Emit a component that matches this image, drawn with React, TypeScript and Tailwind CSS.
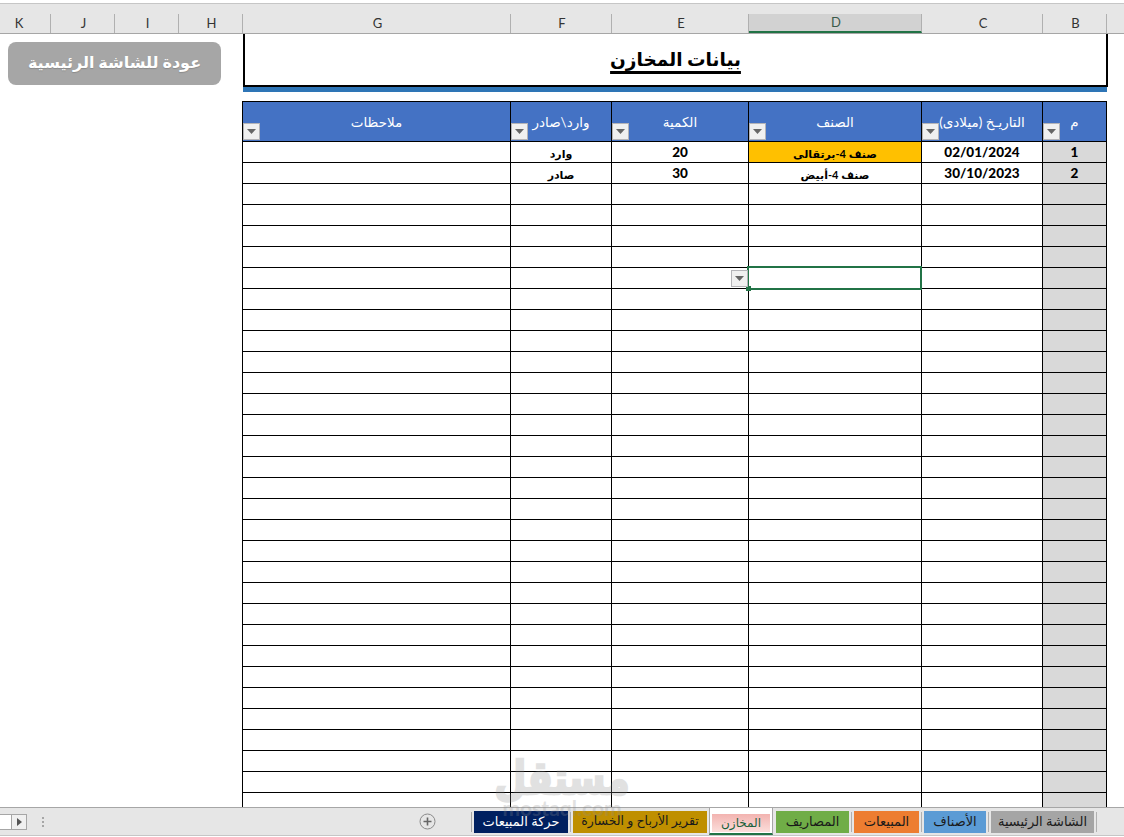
const ROW_COUNT = 32;

// sheet columns, left to right as they appear on screen
const COLUMNS = [
  { letter: "G", label: "ملاحظات", width: "w-[268px]", shade: false },
  { letter: "F", label: "وارد\\صادر", width: "w-[101px]", shade: false },
  { letter: "E", label: "الكمية", width: "w-[137px]", shade: false },
  { letter: "D", label: "الصنف", width: "w-[173px]", shade: false },
  { letter: "C", label: "التاريـخ (ميلادى)", width: "w-[121px]", shade: false },
  { letter: "B", label: "م", width: "w-[64px]", shade: true },
];

const DATA: Record<number, string[]> = {
  0: ["", "وارد", "20", "صنف 4-برتقالى", "02/01/2024", "1"],
  1: ["", "صادر", "30", "صنف 4-أبيض", "30/10/2023", "2"],
};

const TABS = [
  { label: "حركة المبيعات", cls: "w-[94px] bg-[#002060] text-[13px] text-white" },
  { label: "تقرير الأرباح و الخسارة", cls: "w-[134px] bg-[#bf8f00] text-[12.5px] text-[#1a1a1a]" },
  { label: "المصاريف", cls: "w-[73px] bg-[#70ad47] text-[13px] text-[#1a1a1a]" },
  { label: "المبيعات", cls: "w-[65px] bg-[#ed7d31] text-[13px] text-[#1a1a1a]" },
  { label: "الأصناف", cls: "w-[62px] bg-[#5b9bd5] text-[13px] text-[#1a1a1a]" },
  { label: "الشاشة الرئيسية", cls: "w-[103px] bg-[#a5a5a5] text-[13px] text-[#1a1a1a]" },
];

function FilterButton({ className }: { className: string }) {
  return (
    <div className={`absolute flex h-[17px] w-[17px] items-center justify-center border border-[#b4b4b8] bg-[#f0f0f0] ${className}`}>
      <svg width="9" height="5" viewBox="0 0 9 5">
        <path d="M0 0h9L4.5 5z" fill="#666" />
      </svg>
    </div>
  );
}

function LetterCell({ letter, width, active, nudge = "pl-[2px]" }: { letter: string; width: string; active?: boolean; nudge?: string }) {
  return (
    <div
      className={`flex shrink-0 items-center justify-center border-r border-[#b0b0b0] text-[13px] ${width} ${nudge} ${
        active ? "border-b-2 border-b-[#217346] bg-[#d2d2d2] text-[#3a5a4a]" : "text-[#333]"
      }`}
    >
      {letter}
    </div>
  );
}

function Tab({ label, cls }: { label: string; cls: string }) {
  return (
    <div className={`flex h-[22px] shrink-0 items-center justify-center whitespace-nowrap ${cls}`}>{label}</div>
  );
}

export default function App() {
  return (
    <div className="relative flex h-[837px] w-[1124px] flex-col overflow-hidden bg-white font-[Lato,'DejaVu_Sans',sans-serif]">
      {/* column letters */}
      <div className="mt-[3px] flex h-[31px] shrink-0 items-end border-y border-t-[#c6c6c6] border-b-[#a6a6a6] bg-[#e6e6e6]">
        <div className="flex h-[19px] w-full">
          <LetterCell letter="K" width="w-[51px]" nudge="pr-[12px]" />
          <LetterCell letter="J" width="w-[64px]" />
          <LetterCell letter="I" width="w-[64px]" />
          <LetterCell letter="H" width="w-[64px]" />
          {COLUMNS.map((c) => (
            <LetterCell key={c.letter} letter={c.letter} width={c.width} active={c.letter === "D"} />
          ))}
        </div>
      </div>

      {/* sheet */}
      <div className="flex h-[773px] shrink-0 overflow-hidden">
        <div className="w-[243px] shrink-0 pl-2 pt-2">
          <div className="flex h-[43px] w-[213px] items-center justify-center rounded-lg bg-[#a6a6a6] pb-[3px] text-[16px] font-bold text-white [text-shadow:0_1px_1px_#8a8a8a]">
            عودة للشاشة الرئيسية
          </div>
        </div>

        <div className="w-[865px] shrink-0">
          <div className="flex h-[53px] items-center justify-center border-x-2 border-b-2 border-black">
            <span className="text-[18.5px] font-bold text-black underline decoration-[3px] underline-offset-[5px]">بيانات المخازن</span>
          </div>
          <div className="h-[5px] w-[864px] bg-[#2e75b6]" />

          <div className="relative -ml-px mt-[9px] w-[865px] border-l border-black">
            {/* table head */}
            <div className="flex h-[41px] border-y border-black bg-[#4472c4]">
              {COLUMNS.map((c) => (
                <div
                  key={c.letter}
                  className={`relative flex shrink-0 items-center justify-center overflow-hidden whitespace-nowrap border-r border-black pt-[2px] text-[13.5px] text-white ${c.width}`}
                >
                  {c.label}
                  <FilterButton className="bottom-[1px] left-0" />
                </div>
              ))}
            </div>

            {/* table rows */}
            {Array.from({ length: ROW_COUNT }, (_, row) => (
              <div key={row} className="flex h-[21px] border-b border-black">
                {COLUMNS.map((c, col) => (
                  <div
                    key={c.letter}
                    className={`flex shrink-0 items-center justify-center border-r border-black pt-[2px] text-[13.5px] font-black leading-none text-black ${c.width} ${
                      c.shade ? "bg-[#d9d9d9]" : ""
                    } ${row === 0 && c.letter === "D" ? "bg-[#ffc000]" : ""}`}
                  >
                    {col === 3 || col === 1 ? <span className="text-[11px] font-bold">{DATA[row]?.[col]}</span> : DATA[row]?.[col]}
                  </div>
                ))}
              </div>
            ))}

            {/* active cell with its validation dropdown */}
            <div className="absolute left-[504px] top-[165px] h-[24px] w-[175px] border-2 border-[#217346]">
              <div className="absolute -bottom-[3px] -left-[3px] h-[5px] w-[5px] bg-[#217346]" />
            </div>
            <FilterButton className="left-[488px] top-[169px]" />
          </div>
        </div>
      </div>

      {/* sheet tabs */}
      <div className="flex h-[29px] shrink-0 items-center border-y border-t-[#a6a6a6] border-b-[#c6c6c6] bg-[#e6e6e6]">
        <div className="flex h-[16px] w-[27px] shrink-0 border border-l-0 border-[#a6a6a6] bg-white">
          <div className="w-[12px] border-r border-[#a6a6a6]" />
          <div className="flex flex-1 items-center justify-center bg-[#f0f0f0]">
            <svg width="5" height="8" viewBox="0 0 5 8">
              <path d="M0 0l5 4-5 4z" fill="#555" />
            </svg>
          </div>
        </div>
        <div className="ml-[15px] flex flex-col gap-[2px]">
          <div className="h-[2px] w-[2px] bg-[#a6a6a6]" />
          <div className="h-[2px] w-[2px] bg-[#a6a6a6]" />
          <div className="h-[2px] w-[2px] bg-[#a6a6a6]" />
        </div>
        <svg className="ml-[375px] shrink-0" width="17" height="17" viewBox="0 0 17 17">
          <circle cx="8.5" cy="8.5" r="7.5" fill="none" stroke="#8a8a8a" />
          <path d="M8.5 4.5v8M4.5 8.5h8" stroke="#666" strokeWidth="1.6" />
        </svg>

        <div className="ml-[35px] h-[20px] w-px shrink-0 bg-[#a6a6a6]" />
        <div className="ml-[2px] flex items-center">
          <Tab {...TABS[0]} />
          <div className="mx-[2px] h-[20px] w-px bg-[#b0b0b0]" />
          <Tab {...TABS[1]} />
          <div className="ml-[2px] flex h-[27px] w-[64px] shrink-0 items-end justify-center self-start border-x border-b-2 border-x-[#a6a6a6] border-b-[#217346] bg-white px-[2px] pb-[1px]">
            <div className="flex h-[18px] w-full items-center justify-center bg-[linear-gradient(#f2b3b0,#fbdedb)] text-[12px] font-medium text-[#17603a]">
              المخازن
            </div>
          </div>
          <div className="ml-[3px]" />
          <Tab {...TABS[2]} />
          <div className="mx-[2px] h-[20px] w-px bg-[#b0b0b0]" />
          <Tab {...TABS[3]} />
          <div className="mx-[2px] h-[20px] w-px bg-[#b0b0b0]" />
          <Tab {...TABS[4]} />
          <div className="mx-[2px] h-[20px] w-px bg-[#b0b0b0]" />
          <Tab {...TABS[5]} />
          <div className="ml-[2px] h-[20px] w-px bg-[#b0b0b0]" />
        </div>
      </div>

      {/* mostaql watermark */}
      <div className="pointer-events-none absolute left-[487px] top-[752px] z-10 flex w-[150px] flex-col items-center font-bold leading-none text-[#8c8c8c] opacity-25">
        <span className="scale-y-125 text-[37px] leading-[48px] [-webkit-text-stroke:2px_#8c8c8c]">مستقل</span>
        <span className="text-[21px] leading-[15px]">mostaql.com</span>
      </div>
    </div>
  );
}
